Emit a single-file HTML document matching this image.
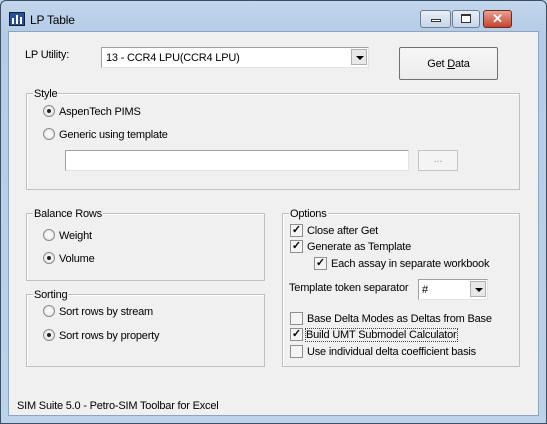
<!DOCTYPE html><html><head><style>
*{margin:0;padding:0;box-sizing:border-box}
body{width:547px;height:424px;overflow:hidden;font:11px "Liberation Sans",sans-serif;letter-spacing:-0.2px;color:#000;background:#b9d1ea;position:relative}
.a{position:absolute}
.t{margin-top:2px}
.win{left:0;top:0;width:547px;height:424px;border:1px solid #3c4f63;border-radius:6px 6px 0 0;background:linear-gradient(#c2d6ec,#b4cce6 31px,#bcd3ea)}
.client{left:8px;top:31px;width:531px;height:385px;background:#f0f0f0;border:1px solid #8ea5bd}
.grp{border:1px solid #c0c0c0;box-shadow:inset 1px 1px 0 #fff}
.lg{background:#f0f0f0;padding:0 1px;line-height:12px}
.rad{width:12px;height:12px;border-radius:50%;border:1px solid #8a8a8a;background:radial-gradient(#fff,#e0e0e0)}
.rad.on::after{content:"";position:absolute;left:3px;top:3px;width:4px;height:4px;border-radius:50%;background:#222}
.cb{width:13px;height:13px;border:1px solid #8e8f8f;background:#f4f4f4;font-size:11px;line-height:11px;text-align:center;font-weight:bold;letter-spacing:0}
.in{background:#fff;border:1px solid #a0a0a0;border-right-color:#e3e3e3;border-bottom-color:#e3e3e3}
.btn{border:1px solid #707070;border-radius:2px;background:linear-gradient(#f6f6f6,#ececec);text-align:center}
.dd{width:16px;height:16px;right:1px;top:1px;background:#e8e8e8;border:1px solid #b0b0b0}
.dd::after{content:"";position:absolute;left:4px;top:6px;border:4px solid transparent;border-top:4px solid #000;border-bottom:0}
.wb{top:10px;height:18px;border:1px solid #6d7e92;border-radius:3px;background:linear-gradient(#e8eff8,#c6d5e8)}
</style></head><body>
<div class="a win"></div>
<div class="a" style="left:9px;top:12px;width:16px;height:14px;background:#2a4f9a;border:1px solid #123"></div>
<div class="a" style="left:12px;top:18px;width:2px;height:6px;background:#fff"></div>
<div class="a" style="left:16px;top:15px;width:2px;height:9px;background:#fff"></div>
<div class="a" style="left:20px;top:17px;width:2px;height:7px;background:#fff"></div>
<div class="a" style="left:30px;top:13px;font-size:12px">LP Table</div>
<div class="a wb" style="left:420px;width:31px"><div class="a" style="left:10px;top:8px;width:10px;height:3px;border:1px solid #333;background:#fff"></div></div>
<div class="a wb" style="left:452px;width:28px"><div class="a" style="left:8px;top:3px;width:10px;height:9px;border:1px solid #333;border-top-width:2px;background:#fff"></div></div>
<div class="a wb" style="left:483px;width:29px;background:linear-gradient(#e8a191,#c7432c);border-color:#6b2a1e;color:#fff;font-weight:bold;text-align:center;line-height:15px;font-size:13px">✕</div>
<div class="a client"></div>
<div class="a t" style="left:25px;top:47px">LP Utility:</div>
<div class="a in" style="left:101px;top:47px;width:268px;height:21px"><span class="a" style="left:4px;top:4px">13 - CCR4 LPU(CCR4 LPU)</span><div class="a dd"></div></div>
<div class="a btn" style="left:399px;top:47px;width:99px;height:33px;line-height:33px">Get <u>D</u>ata</div>

<div class="a grp" style="left:26px;top:93px;width:494px;height:97px"></div>
<div class="a lg" style="left:33px;top:88px">Style</div>
<div class="a rad on" style="left:43px;top:105px"></div><div class="a t" style="left:59px;top:104px">AspenTech PIMS</div>
<div class="a rad" style="left:43px;top:128px"></div><div class="a t" style="left:59px;top:127px">Generic using template</div>
<div class="a in" style="left:65px;top:150px;width:344px;height:21px"></div>
<div class="a" style="left:418px;top:150px;width:40px;height:21px;border:1px solid #c5c5c5;background:#f4f4f4;color:#999;text-align:center;line-height:17px">...</div>

<div class="a grp" style="left:26px;top:213px;width:239px;height:68px"></div>
<div class="a lg" style="left:33px;top:208px">Balance Rows</div>
<div class="a rad" style="left:43px;top:229px"></div><div class="a t" style="left:59px;top:228px">Weight</div>
<div class="a rad on" style="left:43px;top:252px"></div><div class="a t" style="left:59px;top:251px">Volume</div>

<div class="a grp" style="left:26px;top:294px;width:239px;height:73px"></div>
<div class="a lg" style="left:33px;top:289px">Sorting</div>
<div class="a rad" style="left:43px;top:305px"></div><div class="a t" style="left:59px;top:304px">Sort rows by stream</div>
<div class="a rad on" style="left:43px;top:329px"></div><div class="a t" style="left:59px;top:328px">Sort rows by property</div>

<div class="a grp" style="left:282px;top:213px;width:238px;height:154px"></div>
<div class="a lg" style="left:289px;top:208px">Options</div>
<div class="a cb" style="left:290px;top:224px">✓</div><div class="a t" style="left:307px;top:223px">Close after Get</div>
<div class="a cb" style="left:290px;top:240px">✓</div><div class="a t" style="left:307px;top:239px">Generate as Template</div>
<div class="a cb" style="left:314px;top:257px">✓</div><div class="a t" style="left:331px;top:256px">Each assay in separate workbook</div>
<div class="a t" style="left:289px;top:280px">Template token separator</div>
<div class="a in" style="left:418px;top:279px;width:70px;height:21px"><span class="a" style="left:3px;top:4px">#</span><div class="a dd"></div></div>
<div class="a cb" style="left:290px;top:312px"></div><div class="a t" style="left:307px;top:311px">Base Delta Modes as Deltas from Base</div>
<div class="a cb" style="left:290px;top:328px">✓</div><div class="a t" style="left:306px;top:327px;outline:1px dotted #444">Build UMT Submodel Calculator</div>
<div class="a cb" style="left:290px;top:345px"></div><div class="a t" style="left:307px;top:344px">Use individual delta coefficient basis</div>

<div class="a t" style="left:17px;top:398px">SIM Suite 5.0 - Petro-SIM Toolbar for Excel</div>
</body></html>
